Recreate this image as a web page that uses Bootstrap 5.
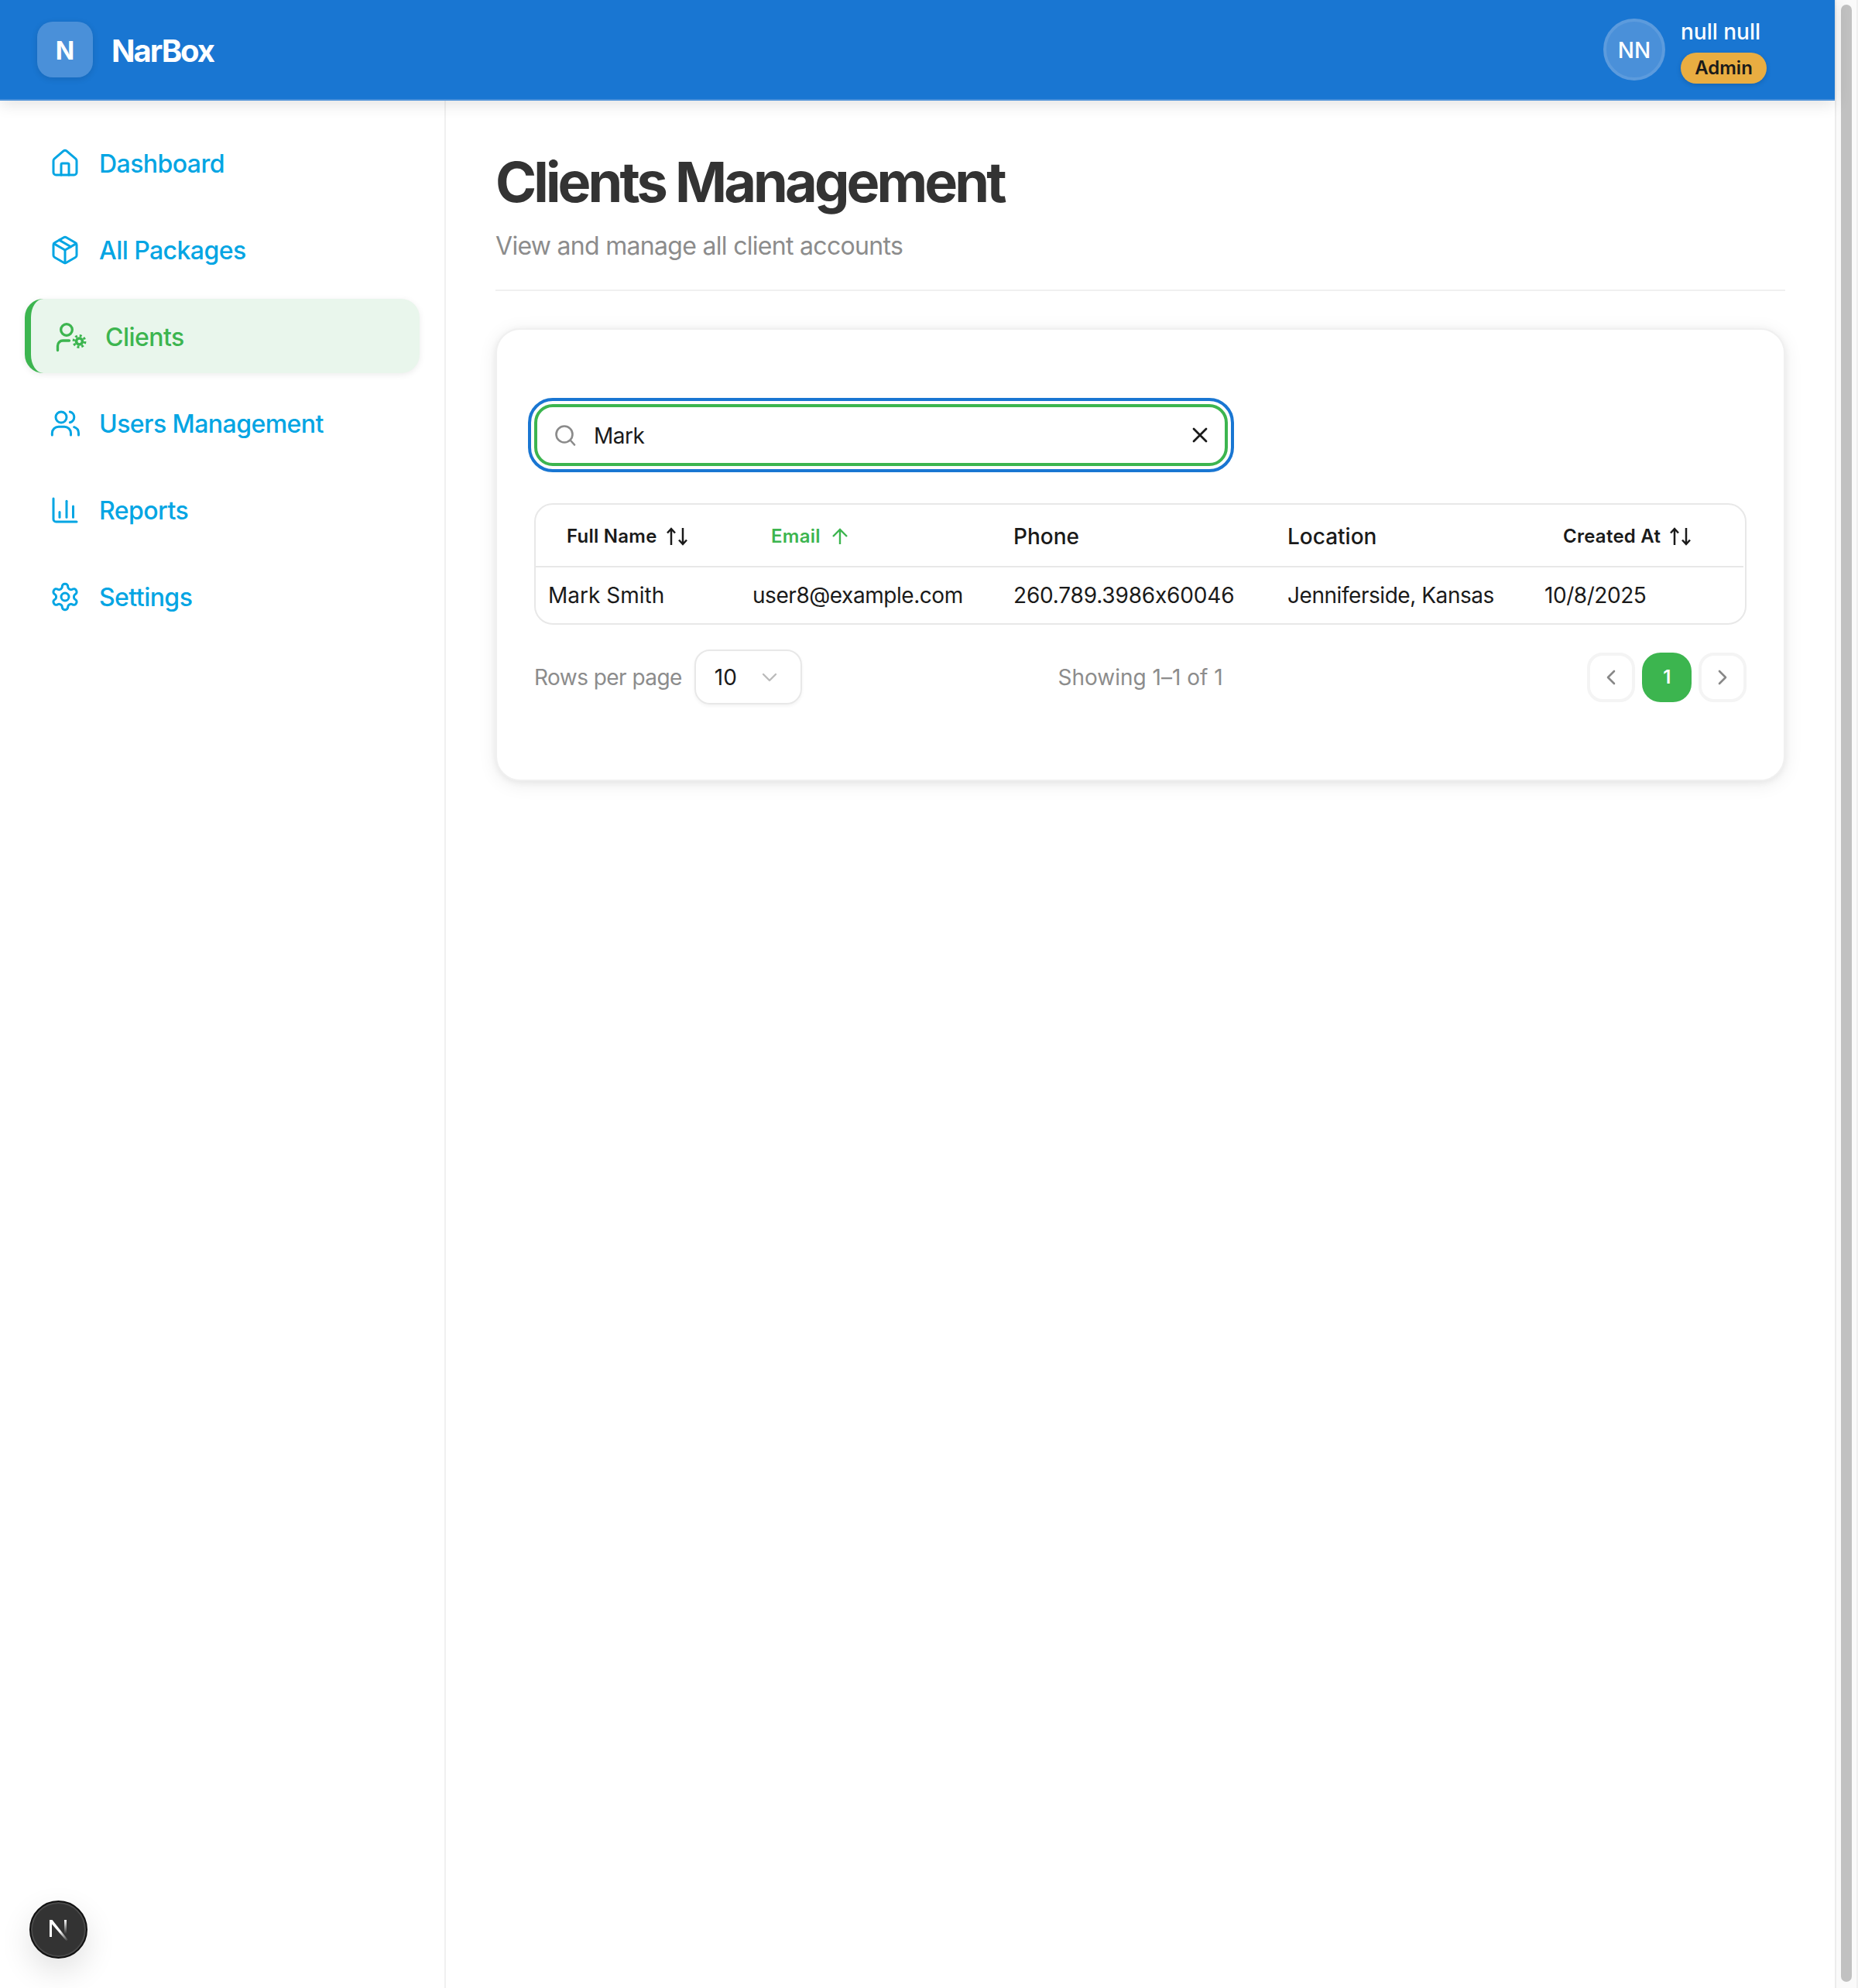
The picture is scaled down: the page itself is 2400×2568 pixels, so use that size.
<!DOCTYPE html>
<html lang="en">

<head>
    <meta charset="UTF-8">
    <meta name="viewport" content="width=device-width, initial-scale=1.0">
    <title>NarBox - Clients Management</title>
    <link href="https://cdn.jsdelivr.net/npm/bootstrap@5.3.2/dist/css/bootstrap.min.css" rel="stylesheet">
    <style>
        html,
        body {
            height: 2568px;
            overflow: hidden;
        }

        body {
            font-family: Inter, "Liberation Sans", sans-serif;
            font-size: 28px;
            font-feature-settings: "calt" 0;
            color: #1a1a1a;
            background-color: #ffffff;
        }

        .app-shell {
            height: 2568px;
            position: relative;
        }

        .page-column {
            width: 2370px;
            min-width: 0;
        }

        /* header */
        .top-bar {
            height: 130px;
            padding: 0 88px 0 48px;
            background-color: #1976d2;
            border-bottom: 2px solid #4a90d9;
            box-shadow: 0 4px 20px rgba(0, 0, 0, 0.12);
            position: relative;
            z-index: 2;
        }

        .logo-box {
            width: 72px;
            height: 72px;
            padding-top: 3px;
            border-radius: 20px;
            background-color: #4a90d9;
            color: #ffffff;
            font-size: 32px;
            font-weight: 700;
            box-shadow: 0 2px 8px rgba(0, 0, 0, 0.12);
        }

        .brand-name {
            padding: 3px 0 0;
            font-size: 40px;
            font-weight: 700;
            letter-spacing: -2px;
            color: #ffffff;
        }

        .user-avatar {
            width: 80px;
            height: 80px;
            padding-top: 2px;
            border-radius: 50%;
            background-color: #4a90d9;
            border: 4px solid #5c9bdd;
            color: #ffffff;
            font-size: 28px;
            font-weight: 500;
            margin-right: 20px;
        }

        .user-text {
            padding-top: 4px;
        }

        .user-name {
            font-size: 28px;
            font-weight: 500;
            line-height: 34px;
            color: #ffffff;
        }

        .role-pill {
            width: 111px;
            height: 40px;
            margin-top: 10px;
            padding: 0;
            background-color: #e9ad41;
            color: #1a1a1a;
            font-size: 24px;
            font-weight: 600;
            line-height: 40px;
            box-shadow: 0 2px 6px rgba(0, 0, 0, 0.15);
        }

        /* sidebar */
        .side-bar {
            width: 576px;
            flex-shrink: 0;
            padding: 32px 32px 0;
            border-right: 2px solid #f0f0f0;
            gap: 16px;
        }

        .side-link {
            height: 96px;
            padding: 3px 0 0 32px;
            gap: 24px;
            border-radius: 24px;
            font-size: 32px;
            font-weight: 500;
            letter-spacing: -0.55px;
            color: #03a5e3;
        }

        .side-link svg {
            width: 40px;
            height: 40px;
            flex-shrink: 0;
            margin-top: -2px;
            fill: none;
            stroke: currentColor;
            stroke-width: 1.8;
            stroke-linecap: round;
            stroke-linejoin: round;
        }

        .side-link.current {
            color: #3cb54f;
            background-color: #e9f6ec;
            border-left: 8px solid #3cb54f;
            box-shadow: 0 2px 8px rgba(0, 0, 0, 0.08);
        }

        /* main */
        .main-area {
            padding: 62px 64px 0;
        }

        .page-heading {
            font-size: 72px;
            font-weight: 700;
            letter-spacing: -3.9px;
            line-height: 86px;
            color: #333333;
            margin: 0 0 16px;
        }

        .page-sub {
            font-size: 32px;
            line-height: 48px;
            letter-spacing: -0.7px;
            color: #8c8c8c;
            margin: 0;
            padding-bottom: 32px;
            border-bottom: 2px solid #f0f0f0;
        }

        .clients-card {
            margin-top: 48px;
            height: 585px;
            padding: 48px;
            border: 2px solid #f0f0f0;
            border-radius: 32px;
            box-shadow: 0 2px 8px rgba(0, 0, 0, 0.06), 0 4px 24px rgba(0, 0, 0, 0.08);
        }

        .search-box {
            width: 896px;
            height: 80px;
            margin-top: 48px;
            padding: 0 22px;
            gap: 23px;
            border: 4px solid #3cb54f;
            border-radius: 24px;
            outline: 4px solid #1976d2;
            outline-offset: 4px;
            font-size: 28px;
            letter-spacing: -0.5px;
            color: #1a1a1a;
        }

        .search-box span {
            padding-top: 1px;
        }

        .table-wrap {
            margin-top: 48px;
            border: 2px solid #e8e8e8;
            border-radius: 24px;
            overflow: hidden;
        }

        .clients-table {
            table-layout: fixed;
            width: 1560px;
            margin: 0;
        }

        .clients-table th,
        .clients-table td {
            padding: 0 0 0 16px;
            vertical-align: middle;
            font-size: 28px;
            color: #1a1a1a;
            box-shadow: none;
        }

        .clients-table thead th {
            height: 80px;
            padding-top: 3px;
            font-weight: 500;
            border-bottom: 2px solid #e8e8e8;
        }

        .clients-table tbody td {
            height: 73px;
            font-weight: 400;
            letter-spacing: -0.45px;
            border-bottom: 0;
        }

        .clients-table tbody td:first-child {
            letter-spacing: 0;
        }

        .clients-table tbody td.phone-cell {
            letter-spacing: -0.18px;
        }

        .sort-head {
            padding-left: 24px;
            gap: 12px;
            font-size: 24px;
            font-weight: 600;
            letter-spacing: 0.25px;
        }

        .sort-head.sorted {
            color: #3cb54f;
            gap: 14px;
        }

        .table-foot {
            margin-top: 32px;
            height: 71px;
            color: #8c8c8c;
            font-size: 28px;
        }

        .foot-side {
            flex: 1 1 0;
            letter-spacing: -0.55px;
        }

        .rows-select {
            width: 139px;
            height: 71px;
            margin-left: 16px;
            padding: 0 30px 0 24px;
            border: 2px solid #e8e8e8;
            border-radius: 20px;
            box-shadow: 0 2px 4px rgba(0, 0, 0, 0.05);
            font-size: 28px;
            letter-spacing: 0;
            color: #1a1a1a;
        }

        .pager {
            margin: 0;
            gap: 9px;
        }

        .pager .page-item .page-link {
            width: 62px;
            height: 64px;
            padding: 0;
            border: 4px solid #f4f4f4;
            border-radius: 20px;
            background-color: #ffffff;
            color: #888888;
            margin: 0;
        }

        .pager .page-item.active .page-link {
            width: 64px;
            border: 0;
            border-radius: 24px;
            background-color: #3cb54f;
            color: #ffffff;
            font-size: 24px;
            font-weight: 600;
        }

        /* dev indicator, floats over the sidebar */
        .dev-badge {
            position: absolute;
            left: 38px;
            bottom: 38px;
            width: 75px;
            height: 75px;
            border-radius: 50%;
            background-color: #333333;
            border: 2px solid #111111;
            box-shadow: inset 0 0 0 2px #4a4a4a, 0 16px 40px rgba(0, 0, 0, 0.12);
            z-index: 3;
        }

        /* window scrollbar */
        .window-scroll {
            width: 30px;
            flex-shrink: 0;
            padding: 6px 6px 8px 6px;
            background-color: #fafafa;
            border-left: 2px solid #ececec;
            border-right: 2px solid #f0f0f0;
        }

        .window-scroll-thumb {
            width: 16px;
            background-color: #c1c1c1;
            border-radius: 8px;
        }
    </style>
</head>

<body>
    <div class="app-shell d-flex">
        <div class="page-column d-flex flex-column">
            <!-- Header -->
            <nav class="navbar top-bar flex-nowrap justify-content-between">
                <div class="d-flex align-items-center">
                    <div class="logo-box d-flex align-items-center justify-content-center">N</div>
                    <a class="navbar-brand brand-name m-0 ms-4" href="#">NarBox</a>
                </div>
                <div class="d-flex align-items-center">
                    <div class="user-avatar d-flex align-items-center justify-content-center">NN</div>
                    <div class="user-text">
                        <div class="user-name">null null</div>
                        <span class="badge rounded-pill role-pill d-block">Admin</span>
                    </div>
                </div>
            </nav>

            <div class="d-flex flex-grow-1">
                <!-- Sidebar -->
                <nav class="nav flex-column flex-nowrap side-bar">
                    <a class="nav-link side-link d-flex align-items-center" href="#">
                        <svg viewBox="0 0 24 24"><path d="M15 21v-8a1 1 0 0 0-1-1h-4a1 1 0 0 0-1 1v8"/><path d="M3 10a2 2 0 0 1 .709-1.528l7-5.999a2 2 0 0 1 2.582 0l7 5.999A2 2 0 0 1 21 10v9a2 2 0 0 1-2 2H5a2 2 0 0 1-2-2z"/></svg>
                        Dashboard
                    </a>
                    <a class="nav-link side-link d-flex align-items-center" href="#">
                        <svg viewBox="0 0 24 24"><path d="M11 21.73a2 2 0 0 0 2 0l7-4A2 2 0 0 0 21 16V8a2 2 0 0 0-1-1.73l-7-4a2 2 0 0 0-2 0l-7 4A2 2 0 0 0 3 8v8a2 2 0 0 0 1 1.73z"/><path d="M12 22V12"/><path d="m3.3 7 8.7 5 8.7-5"/><path d="m7.5 4.27 9 5.15"/></svg>
                        All Packages
                    </a>
                    <a class="nav-link side-link current d-flex align-items-center" href="#">
                        <svg viewBox="0 0 24 24"><circle cx="8.4" cy="6.6" r="4.4" stroke-width="2"/><path d="M1.5 22.5V19a4 4 0 0 1 4-4h5" stroke-width="2"/><circle cx="18.3" cy="15.6" r="2.4" stroke-width="2.2"/><circle cx="18.3" cy="15.6" r="4.4" stroke-width="1.9" stroke-dasharray="1.73 1.73" stroke-linecap="butt"/></svg>
                        Clients
                    </a>
                    <a class="nav-link side-link d-flex align-items-center" href="#">
                        <svg viewBox="0 0 24 24"><circle cx="9" cy="7.2" r="4.2"/><path d="M2 21v-1.5a5 5 0 0 1 5-5h4.5a5 5 0 0 1 5 5V21"/><path d="M22.5 21v-1.5a5 5 0 0 0-3.5-4.7"/><path d="M15.8 3a4.2 4.2 0 0 1 0 8.2"/></svg>
                        Users Management
                    </a>
                    <a class="nav-link side-link d-flex align-items-center" href="#">
                        <svg viewBox="0 0 24 24"><path d="M3 3v16a2 2 0 0 0 2 2h16"/><path d="M7.8 17.5v-4"/><path d="M13.2 17.5V5"/><path d="M18.3 17.5V9"/></svg>
                        Reports
                    </a>
                    <a class="nav-link side-link d-flex align-items-center" href="#">
                        <svg viewBox="0 0 24 24"><path d="M12.22 2h-.44a2 2 0 0 0-2 2v.18a2 2 0 0 1-1 1.73l-.43.25a2 2 0 0 1-2 0l-.15-.08a2 2 0 0 0-2.73.73l-.22.38a2 2 0 0 0 .73 2.73l.15.1a2 2 0 0 1 1 1.72v.51a2 2 0 0 1-1 1.74l-.15.09a2 2 0 0 0-.73 2.73l.22.38a2 2 0 0 0 2.73.73l.15-.08a2 2 0 0 1 2 0l.43.25a2 2 0 0 1 1 1.73V20a2 2 0 0 0 2 2h.44a2 2 0 0 0 2-2v-.18a2 2 0 0 1 1-1.73l.43-.25a2 2 0 0 1 2 0l.15.08a2 2 0 0 0 2.73-.73l.22-.39a2 2 0 0 0-.73-2.73l-.15-.08a2 2 0 0 1-1-1.74v-.5a2 2 0 0 1 1-1.74l.15-.09a2 2 0 0 0 .73-2.73l-.22-.38a2 2 0 0 0-2.73-.73l-.15.08a2 2 0 0 1-2 0l-.43-.25a2 2 0 0 1-1-1.73V4a2 2 0 0 0-2-2z"/><circle cx="12" cy="12" r="3"/></svg>
                        Settings
                    </a>
                </nav>

                <!-- Main content -->
                <main class="main-area flex-grow-1">
                    <h1 class="page-heading">Clients Management</h1>
                    <p class="page-sub">View and manage all client accounts</p>

                    <div class="card clients-card">
                        <div class="search-box d-flex align-items-center">
                            <svg width="28" height="28" viewBox="0 0 28 28" fill="none" stroke="#8a8a8a" stroke-width="2.6" stroke-linecap="round"><circle cx="13" cy="13" r="10.5"/><path d="M21 21l5 5.5"/></svg>
                            <span class="flex-grow-1">Mark</span>
                            <svg width="20" height="20" viewBox="0 0 20 20" fill="none" stroke="#1a1a1a" stroke-width="2.8" stroke-linecap="round"><path d="M2 2l16 16M18 2L2 18"/></svg>
                        </div>

                        <div class="table-wrap">
                            <table class="table clients-table">
                                <colgroup>
                                    <col style="width: 264px">
                                    <col style="width: 337px">
                                    <col style="width: 354px">
                                    <col style="width: 332px">
                                    <col style="width: 273px">
                                </colgroup>
                                <thead>
                                    <tr>
                                        <th>
                                            <div class="sort-head d-flex align-items-center">Full Name
                                                <svg width="28" height="24" viewBox="0 0 28 24" fill="none" stroke="currentColor" stroke-width="2.5"><path d="M6 23V2M1 7.5L6 2l5 5.5"/><path d="M21 1v21M16 16.5l5 5.5 5-5.5"/></svg>
                                            </div>
                                        </th>
                                        <th>
                                            <div class="sort-head sorted d-flex align-items-center">Email
                                                <svg width="22" height="22" viewBox="0 0 22 22" fill="none" stroke="currentColor" stroke-width="2.4"><path d="M11 21V2M2 11l9-9 9 9"/></svg>
                                            </div>
                                        </th>
                                        <th>Phone</th>
                                        <th>Location</th>
                                        <th>
                                            <div class="sort-head d-flex align-items-center">Created At
                                                <svg width="28" height="24" viewBox="0 0 28 24" fill="none" stroke="currentColor" stroke-width="2.5"><path d="M6 23V2M1 7.5L6 2l5 5.5"/><path d="M21 1v21M16 16.5l5 5.5 5-5.5"/></svg>
                                            </div>
                                        </th>
                                    </tr>
                                </thead>
                                <tbody>
                                    <tr>
                                        <td>Mark Smith</td>
                                        <td>user8@example.com</td>
                                        <td class="phone-cell">260.789.3986x60046</td>
                                        <td>Jenniferside, Kansas</td>
                                        <td>10/8/2025</td>
                                    </tr>
                                </tbody>
                            </table>
                        </div>

                        <div class="table-foot d-flex align-items-center">
                            <div class="foot-side d-flex align-items-center">
                                Rows per page
                                <div class="rows-select d-flex align-items-center justify-content-between">
                                    10
                                    <svg width="20" height="12" viewBox="0 0 20 12" fill="none" stroke="#bbbbbb" stroke-width="2.4" stroke-linecap="round" stroke-linejoin="round"><path d="M2 2l8 8 8-8"/></svg>
                                </div>
                            </div>
                            <div>Showing 1–1 of 1</div>
                            <div class="foot-side d-flex justify-content-end">
                                <ul class="pagination pager align-items-center">
                                    <li class="page-item"><a class="page-link d-flex align-items-center justify-content-center" href="#">
                                        <svg width="14" height="20" viewBox="0 0 14 20" fill="none" stroke="currentColor" stroke-width="2.6" stroke-linecap="round" stroke-linejoin="round"><path d="M11 2L3 10l8 8"/></svg>
                                    </a></li>
                                    <li class="page-item active"><a class="page-link d-flex align-items-center justify-content-center" href="#">1</a></li>
                                    <li class="page-item"><a class="page-link d-flex align-items-center justify-content-center" href="#">
                                        <svg width="14" height="20" viewBox="0 0 14 20" fill="none" stroke="currentColor" stroke-width="2.6" stroke-linecap="round" stroke-linejoin="round"><path d="M3 2l8 8-8 8"/></svg>
                                    </a></li>
                                </ul>
                            </div>
                        </div>
                    </div>
                </main>
            </div>
        </div>

        <!-- Window scrollbar -->
        <div class="window-scroll d-flex">
            <div class="window-scroll-thumb"></div>
        </div>

        <!-- Next.js dev indicator -->
        <div class="dev-badge d-flex align-items-center justify-content-center">
            <svg width="28" height="30" viewBox="0 0 28 30">
                <defs>
                    <linearGradient id="nFade" x1="0" y1="0" x2="0" y2="1">
                        <stop offset="0" stop-color="#ffffff"/>
                        <stop offset="1" stop-color="#ffffff" stop-opacity="0"/>
                    </linearGradient>
                    <linearGradient id="nSlash" x1="0" y1="0" x2="1" y2="1">
                        <stop offset="0.55" stop-color="#ffffff"/>
                        <stop offset="1" stop-color="#ffffff" stop-opacity="0"/>
                    </linearGradient>
                </defs>
                <rect x="2" y="2" width="3" height="22" fill="#ffffff"/>
                <rect x="21" y="2" width="3" height="18" fill="url(#nFade)"/>
                <path d="M2 2h3.5L26 28l-2.4 1L2 4z" fill="url(#nSlash)"/>
            </svg>
        </div>
    </div>

    <script src="https://cdn.jsdelivr.net/npm/bootstrap@5.3.2/dist/js/bootstrap.bundle.min.js"></script>
</body>

</html>
